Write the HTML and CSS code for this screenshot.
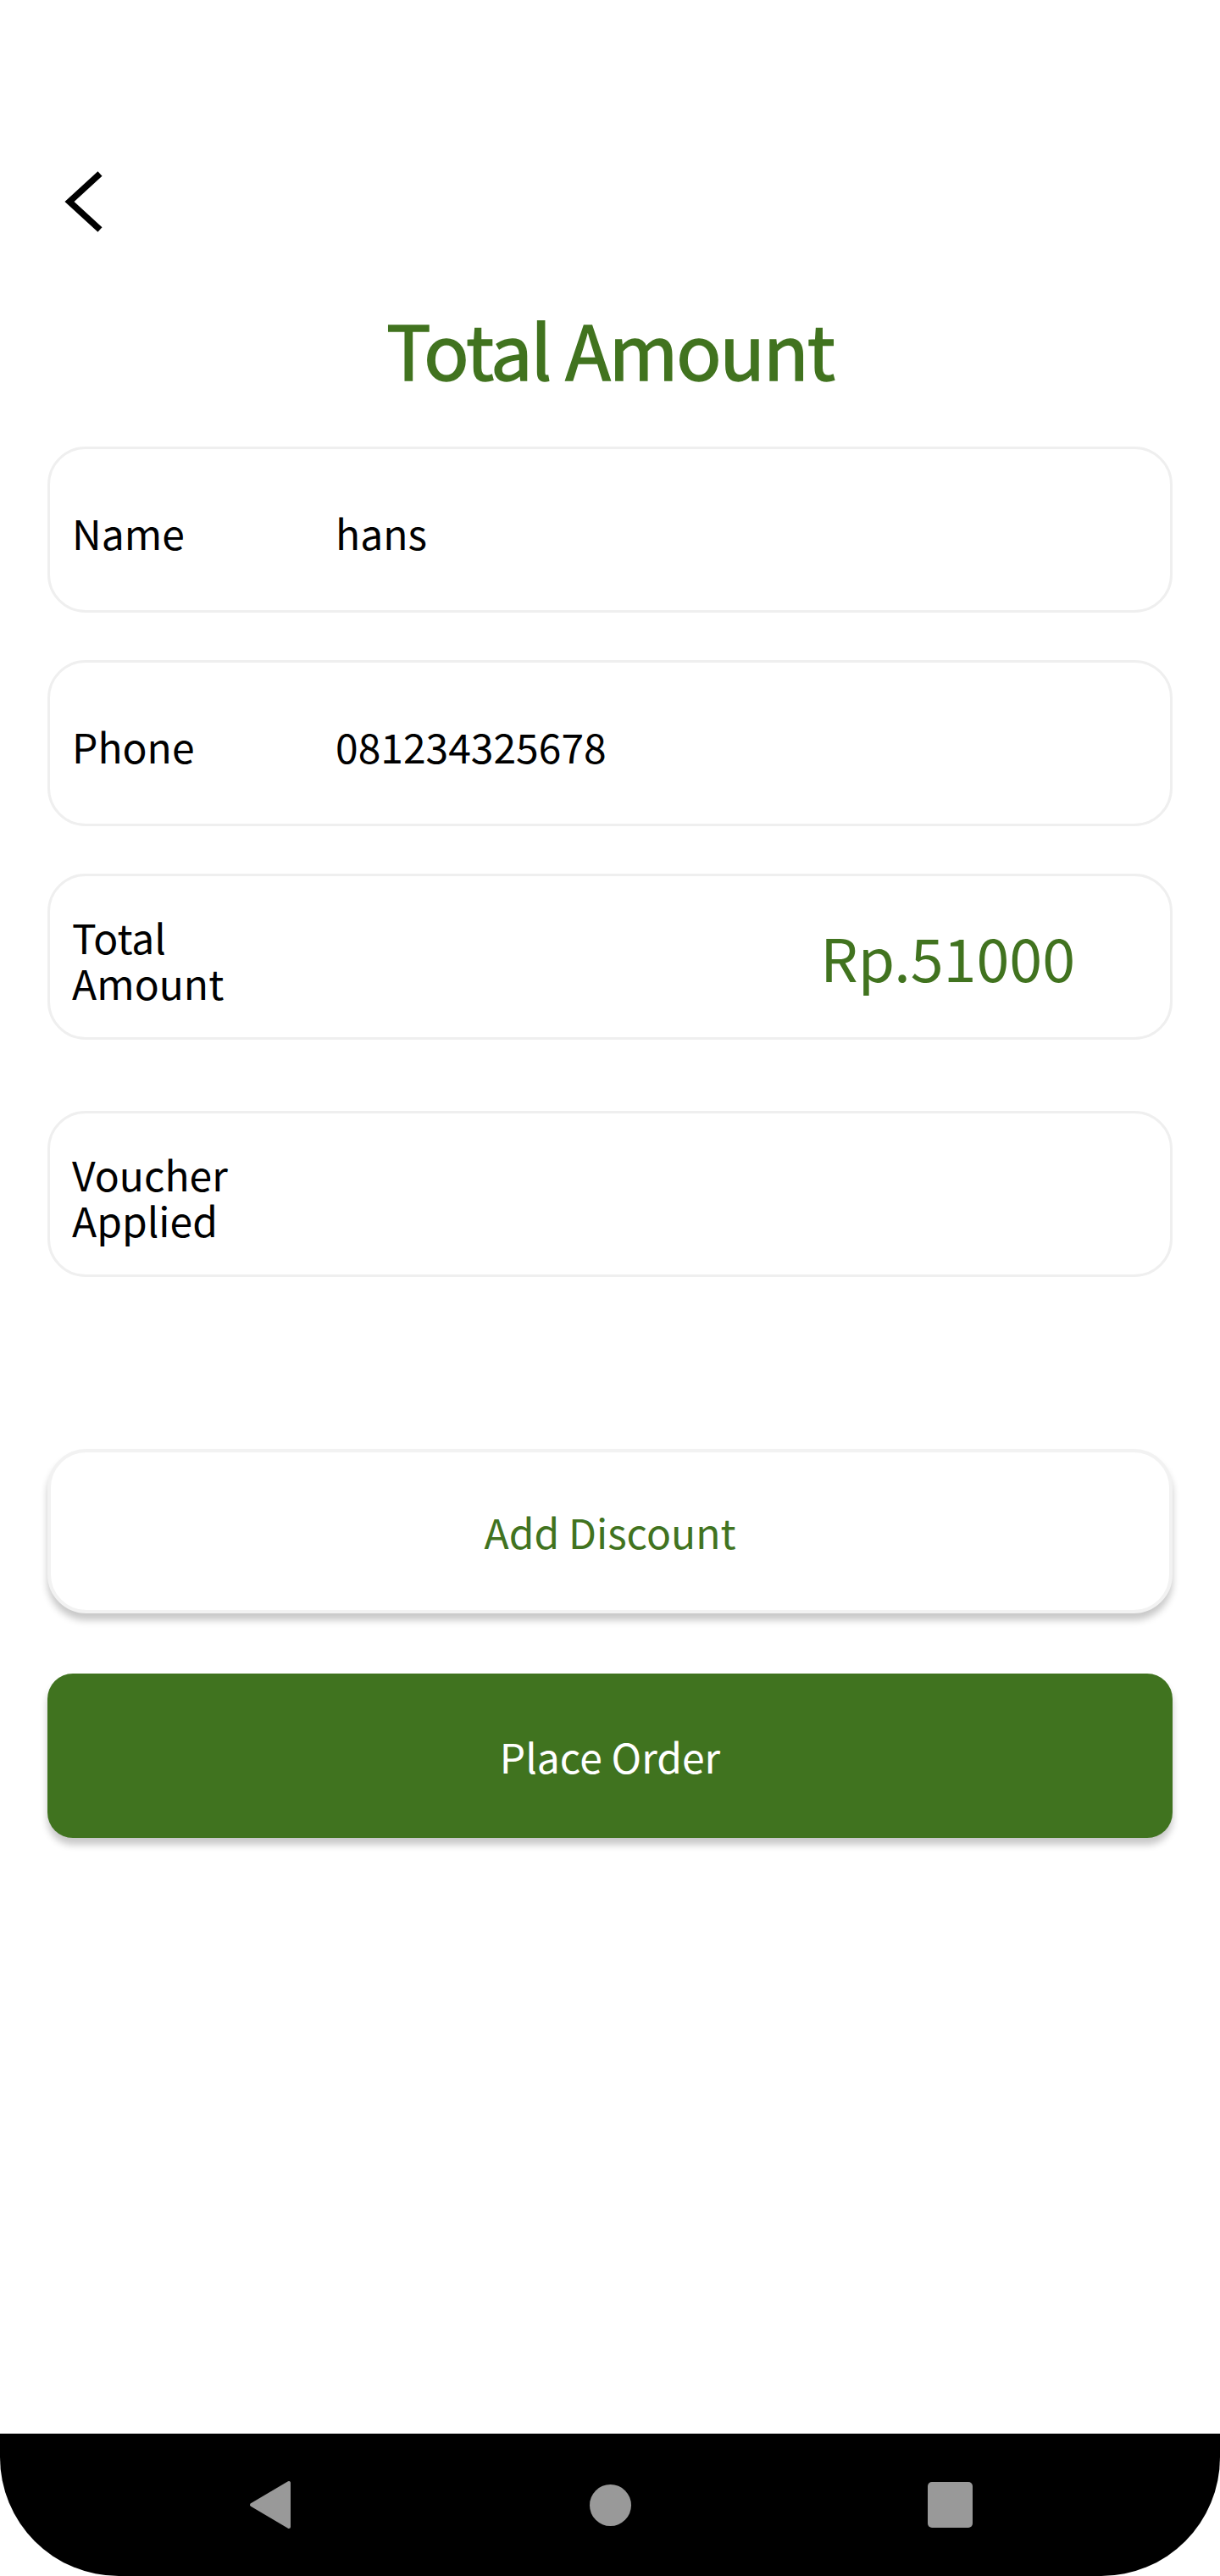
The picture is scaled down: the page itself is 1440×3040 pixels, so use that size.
FILE: index.html
```html
<!DOCTYPE html>
<html lang="en">
<head>
<meta charset="utf-8">
<title>Total Amount</title>
<link rel="stylesheet" href="styles.css">
</head>
<body>
<div class="screen">
  <main class="content">
    <header class="topbar">
      <svg class="back" width="52" height="80" viewBox="0 0 52 80" aria-label="Back">
        <polyline points="45,7 9,40 45,73" fill="none" stroke="#000" stroke-width="7.5" stroke-linejoin="miter" stroke-linecap="butt"/>
      </svg>
    </header>
    <h1 class="title">Total Amount</h1>
    <section class="cards">
      <div class="card">
        <span class="label">Name</span>
        <span class="value">hans</span>
      </div>
      <div class="card">
        <span class="label">Phone</span>
        <span class="value">081234325678</span>
      </div>
      <div class="card">
        <span class="label">Total Amount</span>
        <span class="amount">Rp.51000</span>
      </div>
      <div class="card card-voucher">
        <span class="label">Voucher Applied</span>
      </div>
    </section>
    <section class="actions">
      <button class="btn btn-outline">Add Discount</button>
      <button class="btn btn-primary">Place Order</button>
    </section>
  </main>
  <nav class="navbar">
    <span class="nav-item">
      <svg width="52" height="58" viewBox="0 0 52 58"><path d="M48 3 L48 55 L4 29 Z" fill="#999" stroke="#999" stroke-width="4" stroke-linejoin="round"/></svg>
    </span>
    <span class="nav-item"><span class="nav-home"></span></span>
    <span class="nav-item"><span class="nav-recent"></span></span>
  </nav>
</div>
</body>
</html>
```

FILE: styles.css
```css
html, body {
  margin: 0;
  padding: 0;
  background: #ffffff;
}

body {
  font-family: "Noto Sans CJK JP", "Noto Sans", sans-serif;
  color: #000;
}

.screen {
  width: 1440px;
  min-height: 3040px;
  display: flex;
  flex-direction: column;
}

.content {
  flex: 1;
  display: flex;
  flex-direction: column;
}

.topbar {
  padding: 198px 0 0 73px;
  height: 80px;
}

.back {
  display: block;
}

.title {
  margin: 78px 0 0 0;
  font-size: 88px;
  line-height: 110px;
  font-weight: 400;
  letter-spacing: -2px;
  -webkit-text-stroke: 1.5px #41731f;
  color: #41731f;
  text-align: center;
}

.cards {
  margin: 61px 56px 0 56px;
  display: flex;
  flex-direction: column;
}

.card {
  box-sizing: border-box;
  height: 196px;
  border: 3px solid #efefef;
  border-radius: 45px;
  background: #fff;
  display: flex;
  align-items: center;
  padding: 6px 112px 0 26px;
  margin-bottom: 56px;
  font-size: 48px;
  line-height: 54px;
}

.card-voucher {
  margin-top: 28px;
  margin-bottom: 0;
}

.label {
  flex: 0 0 311px;
  max-width: 250px;
  margin-right: 61px;
}

.value {
  flex: 1;
}

.amount {
  margin-left: auto;
  margin-top: -6px;
  font-size: 70px;
  color: #41731f;
}

.actions {
  margin: 203px 56px 0 56px;
  display: flex;
  flex-direction: column;
  gap: 71px;
}

.btn {
  box-sizing: border-box;
  height: 194px;
  width: 100%;
  font-family: "Noto Sans CJK JP", "Noto Sans", sans-serif;
  font-size: 48px;
  letter-spacing: 0;
  border-radius: 46px;
  cursor: pointer;
}

.btn-outline {
  background: #fff;
  color: #41731f;
  border: 4px solid #f2f2f2;
  box-shadow: 0 8px 8px rgba(0, 0, 0, 0.22);
}

.btn-primary {
  background: #40731f;
  color: #fff;
  border: none;
  border-radius: 30px;
  box-shadow: 0 8px 8px rgba(0, 0, 0, 0.22);
}

.navbar {
  height: 168px;
  background: #000;
  border-radius: 0 0 140px 140px;
  display: flex;
  justify-content: center;
  align-items: center;
  gap: 301px;
}

.nav-item {
  width: 100px;
  height: 60px;
  display: flex;
  align-items: center;
  justify-content: center;
}

.nav-item svg {
  display: block;
}

.nav-home {
  width: 49px;
  height: 49px;
  border-radius: 50%;
  background: #999;
}

.nav-recent {
  width: 53px;
  height: 54px;
  border-radius: 5px;
  background: #999;
}
```
